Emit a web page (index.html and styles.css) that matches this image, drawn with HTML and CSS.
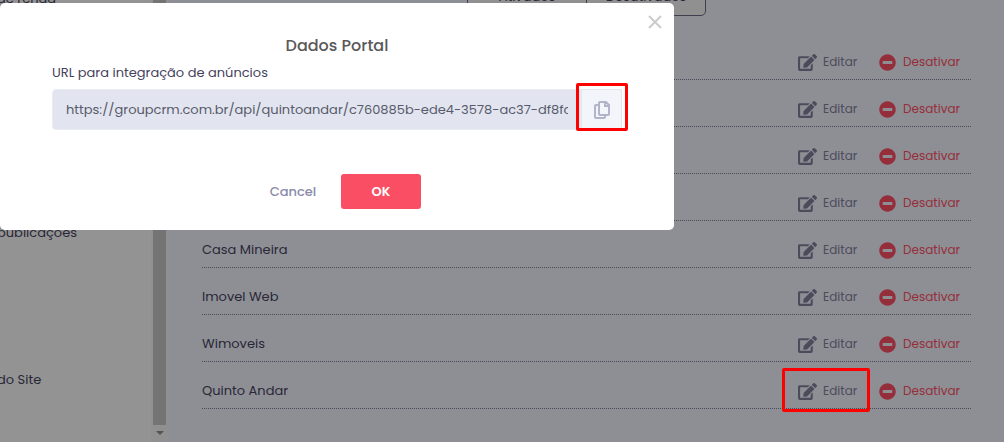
FILE: index.html
```html
<!DOCTYPE html>
<html lang="pt-BR">
<head>
  <meta charset="UTF-8" />
  <meta name="viewport" content="width=device-width, initial-scale=1.0" />
  <title>Portais</title>
  <link rel="stylesheet" href="styles.css">
</head>
<body>

  <!-- Shared icons -->
  <svg class="sprite" aria-hidden="true">
    <symbol id="icon-edit" viewBox="0 0 576 512">
      <path d="M402.6 83.2l90.2 90.2c3.8 3.8 3.8 10 0 13.8L274.4 405.6l-92.8 10.3c-12.4 1.4-22.9-9.1-21.5-21.5l10.3-92.8L388.8 83.2c3.8-3.8 10-3.8 13.8 0zm162-22.9l-48.8-48.8c-15.2-15.2-39.9-15.2-55.2 0l-35.4 35.4c-3.8 3.8-3.8 10 0 13.8l90.2 90.2c3.8 3.8 10 3.8 13.8 0l35.4-35.4c15.2-15.3 15.2-40 0-55.2zM384 346.2V448H64V128h229.8c3.2 0 6.2-1.3 8.5-3.5l40-40c7.6-7.6 2.2-20.5-8.5-20.5H48C21.5 64 0 85.5 0 112v352c0 26.5 21.5 48 48 48h352c26.5 0 48-21.5 48-48V306.2c0-10.7-12.9-16-20.5-8.5l-40 40c-2.2 2.3-3.5 5.3-3.5 8.5z"/>
    </symbol>
    <symbol id="icon-minus" viewBox="0 0 512 512">
      <path d="M256 8C119 8 8 119 8 256s111 248 248 248 248-111 248-248S393 8 256 8zM124 304c-6.600 0-12-5.400-12-12v-72c0-6.600 5.400-12 12-12h264c6.600 0 12 5.400 12 12v72c0 6.600-5.400 12-12 12H124z"/>
    </symbol>
  </svg>

  <div class="page">
    <!-- Sidebar -->
    <aside class="sidebar">
      <ul class="menu">
        <li><a href="#">de renda</a></li>
        <li><a href="#">publicações</a></li>
        <li><a href="#">do Site</a></li>
      </ul>
      <div class="scrollbar">
        <div class="thumb"></div>
        <div class="arrow"></div>
      </div>
    </aside>

    <!-- Portals list -->
    <main class="content">
      <div class="tabs">
        <button type="button">Ativados</button>
        <button type="button">Desativados</button>
      </div>

      <ul class="portals">
        <li>
          <span class="name"></span>
          <button type="button" class="action edit"><svg><use href="#icon-edit"/></svg>Editar</button>
          <button type="button" class="action disable"><svg><use href="#icon-minus"/></svg>Desativar</button>
        </li>
        <li>
          <span class="name"></span>
          <button type="button" class="action edit"><svg><use href="#icon-edit"/></svg>Editar</button>
          <button type="button" class="action disable"><svg><use href="#icon-minus"/></svg>Desativar</button>
        </li>
        <li>
          <span class="name"></span>
          <button type="button" class="action edit"><svg><use href="#icon-edit"/></svg>Editar</button>
          <button type="button" class="action disable"><svg><use href="#icon-minus"/></svg>Desativar</button>
        </li>
        <li>
          <span class="name"></span>
          <button type="button" class="action edit"><svg><use href="#icon-edit"/></svg>Editar</button>
          <button type="button" class="action disable"><svg><use href="#icon-minus"/></svg>Desativar</button>
        </li>
        <li>
          <span class="name">Casa Mineira</span>
          <button type="button" class="action edit"><svg><use href="#icon-edit"/></svg>Editar</button>
          <button type="button" class="action disable"><svg><use href="#icon-minus"/></svg>Desativar</button>
        </li>
        <li>
          <span class="name">Imovel Web</span>
          <button type="button" class="action edit"><svg><use href="#icon-edit"/></svg>Editar</button>
          <button type="button" class="action disable"><svg><use href="#icon-minus"/></svg>Desativar</button>
        </li>
        <li>
          <span class="name">Wimoveis</span>
          <button type="button" class="action edit"><svg><use href="#icon-edit"/></svg>Editar</button>
          <button type="button" class="action disable"><svg><use href="#icon-minus"/></svg>Desativar</button>
        </li>
        <li>
          <span class="name">Quinto Andar</span>
          <button type="button" class="action edit marked"><svg><use href="#icon-edit"/></svg>Editar</button>
          <button type="button" class="action disable"><svg><use href="#icon-minus"/></svg>Desativar</button>
        </li>
      </ul>
    </main>
  </div>

  <!-- Modal -->
  <div class="overlay">
    <div class="modal" role="dialog" aria-labelledby="modal-title">
      <button type="button" class="close" aria-label="Fechar">
        <svg viewBox="0 0 14 14"><path d="M1 1l12 12M13 1L1 13"/></svg>
      </button>
      <h2 id="modal-title">Dados Portal</h2>
      <label for="url">URL para integração de anúncios</label>
      <div class="url-group">
        <input type="text" id="url" readonly value="https://groupcrm.com.br/api/quintoandar/c760885b-ede4-3578-ac37-df8fc">
        <button type="button" class="copy marked" aria-label="Copiar">
          <svg viewBox="0 0 16 18">
            <path d="M5 4H2Q1 4 1 5V16Q1 17 2 17H10Q11 17 11 16V14"/>
            <path d="M6 1H12L15 4V13Q15 14 14 14H6Q5 14 5 13V2Q5 1 6 1zM11 1V5H15"/>
          </svg>
        </button>
      </div>
      <div class="modal-footer">
        <button type="button" class="btn cancel">Cancel</button>
        <button type="button" class="btn ok">OK</button>
      </div>
    </div>
  </div>

</body>
</html>
```
FILE: styles.css
```css
* {
  box-sizing: border-box;
}

body {
  margin: 0;
  font-family: Poppins, Inter, sans-serif;
  font-size: 13px;
  color: #45425c;
  overflow: hidden;
}

button {
  padding: 0;
  border: none;
  background: none;
  font: inherit;
  color: inherit;
  cursor: pointer;
}

ul {
  margin: 0;
  padding: 0;
  list-style: none;
}

.sprite {
  display: none;
}

.page {
  display: flex;
  height: 100vh;
  overflow: hidden;
}

/* Sidebar */
.sidebar {
  display: flex;
  flex: 0 0 168px;
  background: #f6f6f6;
}

.menu {
  flex: 1;
  margin: -11px 0 0 -3px;
}

.menu li {
  line-height: 20px;
  margin-bottom: 127px;
}

.menu li:first-child {
  margin-bottom: 214px;
}

.menu a {
  color: inherit;
  text-decoration: none;
}

.scrollbar {
  display: flex;
  flex-direction: column;
  align-items: center;
  width: 17px;
  padding-bottom: 7px;
  background: #f1f0f0;
}

.thumb {
  flex: 1;
  width: 13px;
  margin-bottom: 6px;
  background: #c1c1c1;
}

.arrow {
  border: 4px solid transparent;
  border-top-color: #8a8a8a;
  border-bottom: none;
}

/* Portals list */
.content {
  flex: 1;
  padding: 0 33px 0 34px;
  background: #edeff8;
}

.tabs {
  display: flex;
  width: 239px;
  height: 38px;
  margin: -22px auto 17px;
  border: 1px solid #6b6984;
  border-radius: 5px;
  background: #f1f1f1;
}

.tabs button {
  flex: 1;
}

.tabs button + button {
  border-left: 1px solid #6b6984;
}

.portals li {
  display: flex;
  align-items: center;
  height: 47px;
  padding: 12px 11px 0 0;
  border-bottom: 1px dotted #7b7a94;
}

.name {
  flex: 1;
}

.action {
  display: flex;
  align-items: center;
  gap: 6px;
  font-size: 12px;
}

.edit {
  width: 81px;
  color: #7f7d9a;
}

.edit svg {
  width: 19px;
  height: 17px;
  fill: #7f7d9a;
}

.disable {
  gap: 7px;
  color: #f94e63;
}

.disable svg {
  width: 17px;
  height: 17px;
  fill: #f94e63;
}

/* Red frame round a control, kept above the overlay */
.marked {
  position: relative;
}

.marked::after {
  content: "";
  position: absolute;
  inset: -14px 9px -12px -16px;
  z-index: 20;
  border: 3px solid #f00;
  border-radius: 2px;
}

.copy.marked::after {
  inset: -7px -7px -2px -6px;
}

/* Modal */
.overlay {
  position: fixed;
  inset: 0;
  z-index: 10;
  padding-top: 3px;
  background: rgba(0, 0, 0, 0.4);
}

.modal {
  position: relative;
  max-width: 674px;
  padding: 32px 52px 21px;
  border-radius: 5px;
  background: #fff;
}

.modal h2 {
  margin: 0;
  font-size: 16px;
  line-height: 22px;
  font-weight: 500;
  text-align: center;
  color: #595959;
}

.modal label {
  display: block;
  margin: 6px 0;
  line-height: 20px;
}

.close {
  position: absolute;
  top: 12px;
  right: 12px;
  width: 14px;
  height: 14px;
}

.close svg {
  display: block;
  fill: none;
  stroke: #ccc;
  stroke-width: 2;
}

.url-group {
  display: flex;
  height: 41px;
}

.url-group input {
  flex: 1;
  min-width: 0;
  padding: 0 12px 0 13px;
  border: 1px solid #e9ecf4;
  border-radius: 4px 0 0 4px;
  background: #e2e5ef;
  font: inherit;
  color: #575a6c;
}

.copy {
  display: flex;
  align-items: center;
  justify-content: center;
  width: 41px;
  border: 1px solid #e2e5ec;
  background: #f2f5f9;
}

.copy svg {
  width: 16px;
  height: 18px;
  fill: none;
  stroke: #b3b3c9;
  stroke-width: 2;
}

.modal-footer {
  display: flex;
  justify-content: center;
  gap: 8px;
  margin-top: 44px;
}

.btn {
  width: 80px;
  height: 35px;
  border-radius: 3px;
  font-weight: 500;
}

.cancel {
  color: #8a8ba9;
}

.ok {
  background: #f94e63;
  color: #fff;
  font-weight: 600;
}
```
